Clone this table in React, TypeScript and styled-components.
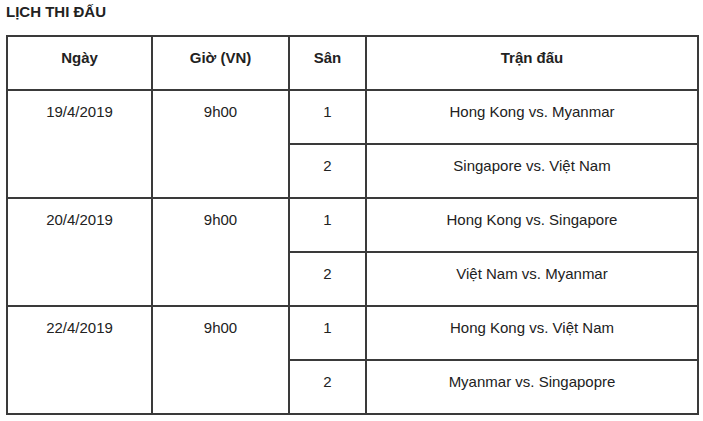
import React from "react";
import styled, { createGlobalStyle } from "styled-components";

const Global = createGlobalStyle`
  html, body { margin: 0; padding: 0; background: #fff; }
  body { font-family: Arial, "Liberation Sans", Helvetica, sans-serif; color: #222; }
`;

const Page = styled.div`
  padding: 3px 0 0 6px;
  width: 692px;
`;

const Title = styled.h3`
  margin: 0 0 15px 0;
  font-size: 15px;
  line-height: 17px;
  font-weight: bold;
  color: #222;
`;

const Table = styled.table`
  border-collapse: collapse;
  width: 691px;
  table-layout: fixed;
  font-size: 15px;
`;

const Cell = styled.td<{ $head?: boolean }>`
  border: 2px solid #3a3a3a;
  height: 54px;
  box-sizing: border-box;
  padding: 12px 4px 0 4px;
  vertical-align: top;
  text-align: center;
  line-height: 17px;
  font-weight: ${(p) => (p.$head ? "bold" : "normal")};
  color: #222;
`;

type Match = { san: string; game: string };
type Day = { date: string; time: string; matches: Match[] };

const days: Day[] = [
  {
    date: "19/4/2019",
    time: "9h00",
    matches: [
      { san: "1", game: "Hong Kong vs. Myanmar" },
      { san: "2", game: "Singapore vs. Việt Nam" },
    ],
  },
  {
    date: "20/4/2019",
    time: "9h00",
    matches: [
      { san: "1", game: "Hong Kong vs. Singapore" },
      { san: "2", game: "Việt Nam vs. Myanmar" },
    ],
  },
  {
    date: "22/4/2019",
    time: "9h00",
    matches: [
      { san: "1", game: "Hong Kong vs. Việt Nam" },
      { san: "2", game: "Myanmar vs. Singapopre" },
    ],
  },
];

export default function App() {
  return (
    <Page>
      <Global />
      <Title>LỊCH THI ĐẤU</Title>
      <Table>
        <colgroup>
          <col style={{ width: 145 }} />
          <col style={{ width: 137 }} />
          <col style={{ width: 77 }} />
          <col style={{ width: 332 }} />
        </colgroup>
        <thead>
          <tr>
            <Cell as="th" $head>Ngày</Cell>
            <Cell as="th" $head>Giờ (VN)</Cell>
            <Cell as="th" $head>Sân</Cell>
            <Cell as="th" $head>Trận đấu</Cell>
          </tr>
        </thead>
        <tbody>
          {days.map((d) =>
            d.matches.map((m, i) => (
              <tr key={d.date + m.san}>
                {i === 0 && <Cell rowSpan={2}>{d.date}</Cell>}
                {i === 0 && <Cell rowSpan={2}>{d.time}</Cell>}
                <Cell>{m.san}</Cell>
                <Cell>{m.game}</Cell>
              </tr>
            ))
          )}
        </tbody>
      </Table>
    </Page>
  );
}
